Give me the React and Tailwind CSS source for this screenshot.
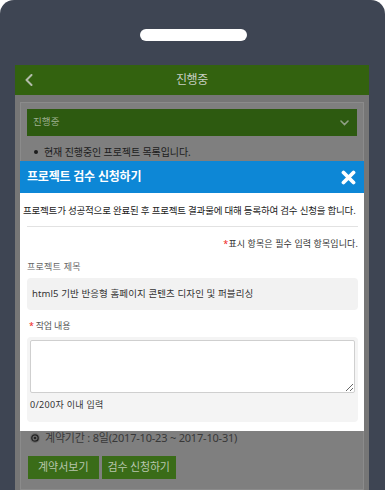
import React from 'react';

const font = { fontFamily: '"Noto Sans", "Noto Sans CJK KR", sans-serif' };

const BackIcon = () => (
  <svg width="8" height="12" viewBox="0 0 8 12" fill="none">
    <polyline points="6.5,1 1.5,6 6.5,11" stroke="#b3bcab" strokeWidth="2" strokeLinejoin="round" strokeLinecap="round" />
  </svg>
);

const ChevronDown = () => (
  <svg width="9" height="6" viewBox="0 0 9 6" fill="none">
    <polyline points="1,1 4.5,4.5 8,1" stroke="#8f9f85" strokeWidth="1.6" strokeLinecap="round" />
  </svg>
);

const CloseIcon = () => (
  <svg width="15" height="15" viewBox="0 0 15 15">
    <path d="M2.5 2.5 L12.5 12.5 M12.5 2.5 L2.5 12.5" stroke="#ffffff" strokeWidth="3.8" strokeLinecap="round" />
  </svg>
);

const ClockDot = () => (
  <svg width="10" height="10" viewBox="0 0 10 10">
    <circle cx="5" cy="5" r="5" fill="#6c6c6c" />
    <circle cx="5" cy="5" r="3.2" fill="none" stroke="#222" strokeWidth="1.3" />
    <circle cx="5" cy="5" r="1.3" fill="#222" />
  </svg>
);

const ReviewModal = () => (
  <div className="-mx-[7px] mt-[1px] bg-white pb-[9px]">
    <div className="h-[32px] bg-[#0d87d6] flex items-center justify-between pl-[7px] pr-[8px]">
      <span className="text-white font-bold text-[12px] tracking-[-0.2px]">프로젝트 검수 신청하기</span>
      <CloseIcon />
    </div>
    <p className="mt-[11px] pl-[3px] text-[9.5px] leading-[14px] tracking-[-0.2px] text-[#222] whitespace-nowrap">
      프로젝트가 성공적으로 완료된 후 프로젝트 결과물에 대해 등록하여 검수 신청을 합니다.
    </p>
    <div className="px-[7px] pr-[6px]">
      <div className="mt-[8px] h-[1px] bg-[#e2e2e2]" />
      <p className="mt-[11px] text-right text-[9px] leading-[12px] tracking-[0.1px] text-[#333]">
        <span className="text-[#e22]">*</span>표시 항목은 필수 입력 항목입니다.
      </p>
      <p className="mt-[11px] text-[9px] leading-[12px] tracking-[0.25px] text-[#666]">프로젝트 제목</p>
      <div className="mt-[5px] h-[32px] bg-[#f2f2f2] rounded-[4px] flex items-center pl-[5px] text-[9.5px] tracking-[0.1px] text-[#333]">
        html5 기반 반응형 홈페이지 콘텐츠 디자인 및 퍼블리싱
      </div>
      <p className="mt-[10px] pl-[2px] text-[9px] leading-[12px] tracking-[-0.2px] text-[#555]">
        <span className="text-[#e22] mr-[2px]">*</span>작업 내용
      </p>
      <div className="mt-[5px] bg-[#f4f4f4] rounded-[4px] p-[3px] pb-[11px]">
        <textarea readOnly className="block w-full h-[53px] bg-white border border-[#cfcfcf] rounded-[2px] resize-y outline-none" />
        <p className="mt-[6px] text-[9px] leading-[12px] tracking-[0.3px] text-[#333]">0/200자 이내 입력</p>
      </div>
    </div>
  </div>
);

export default function App() {
  return (
    <div className="w-[385px] h-[490px] bg-white overflow-hidden" style={font}>
      <div className="h-full bg-[#3e4553] rounded-t-[14px] pt-[29px] flex flex-col">
        <div className="self-center ml-[1px] w-[107px] h-[12px] rounded-full bg-white" />
        <div className="mt-[24px] ml-[15px] w-[354px] flex-1 flex flex-col">
          <div className="relative h-[30px] bg-[#33620f] flex items-center justify-center">
            <span className="absolute left-[10px] top-[9px]"><BackIcon /></span>
            <span className="text-[12px] tracking-[-0.3px] text-[#c9cfc4]">진행중</span>
          </div>
          <div className="flex-1 bg-[#767676] px-[5px] pt-[7px]">
            <div className="h-full bg-[#7f7f7f] border border-[#8b8b8b] px-[6px] pt-[6px]">
              <div className="h-[27px] bg-[#2d5a10] flex items-center justify-between pl-[6px] pr-[8px]">
                <span className="text-[9.5px] tracking-[0.1px] text-[#9fb090]">진행중</span>
                <ChevronDown />
              </div>
              <p className="mt-[8px] h-[16px] flex items-center text-[10px] tracking-[-0.1px] text-[#1c1c1c]">
                <span className="ml-[7px] mr-[6px] w-[4px] h-[4px] rounded-full bg-[#1c1c1c]" />
                현재 진행중인 프로젝트 목록입니다.
              </p>
              <ReviewModal />
              <div className="h-[14px] flex items-center gap-[5px] pl-[3px] text-[11px] text-[#383838]">
                <ClockDot />
                <span className="tracking-[-0.2px]">계약기간 : 8일(2017-10-23 ~ 2017-10-31)</span>
              </div>
              <div className="mt-[11px] ml-[1px] flex gap-[3px]">
                <button className="h-[23px] px-[10px] bg-[#3a6c18] text-[11px] text-[#b7c6ad]">계약서보기</button>
                <button className="h-[23px] px-[6px] bg-[#3a6c18] text-[11px] tracking-[-0.2px] text-[#b7c6ad]">검수 신청하기</button>
              </div>
            </div>
          </div>
        </div>
      </div>
    </div>
  );
}
